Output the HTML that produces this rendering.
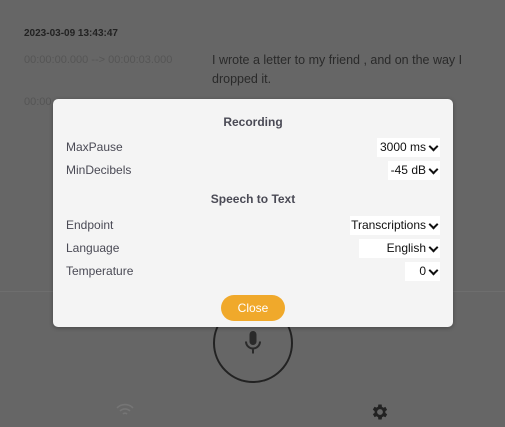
<!DOCTYPE html>
<html><head><style>
body{margin:0;width:505px;height:427px;background:#666;font-family:"Liberation Sans",sans-serif;position:relative;overflow:hidden}
.a{position:absolute;white-space:nowrap}
.modal{position:absolute;left:53px;top:99px;width:400px;height:228px;background:#f4f4f4;border-radius:5px;box-shadow:0 1px 4px rgba(0,0,0,.3)}
.h{position:absolute;left:0;width:400px;text-align:center;font-weight:bold;font-size:12px;color:#4a4a55}
.l{position:absolute;left:13px;font-size:12px;color:#4a4a55}
.s{position:absolute;right:13px;height:19px;background:#fff;font-size:12px;color:#111;text-align:right;line-height:19px;padding-right:14px;box-sizing:border-box}
.s:after{content:"";position:absolute;right:3px;top:5px;width:5px;height:5px;border-right:2px solid #111;border-bottom:2px solid #111;transform:rotate(45deg)}
</style></head><body>
<div class="a" style="left:24px;top:28px;font-size:10px;font-weight:bold;color:#222">2023-03-09 13:43:47</div>
<div class="a" style="left:24px;top:54px;font-size:11px;color:#555">00:00:00.000 --&gt; 00:00:03.000</div>
<div class="a" style="left:212px;top:51px;font-size:12.5px;color:#2a2a2a;line-height:19px">I wrote a letter to my friend , and on the way I<br>dropped it.</div>
<div class="a" style="left:24px;top:96px;font-size:11px;color:#555">00:00</div>
<div class="a" style="left:0;top:291px;width:505px;height:1px;background:#6e6e6e"></div>
<div class="a" style="left:213px;top:303px;width:76px;height:76px;border:2px solid #222;border-radius:50%"></div>
<svg class="a" style="left:241px;top:330px" width="24" height="26" viewBox="0 0 24 26"><rect x="8.5" y="1" width="7" height="14" rx="3.5" fill="#2a2a2a"/><path d="M5 11.5a7 7 0 0 0 14 0M12 18.5v5" stroke="#2a2a2a" stroke-width="2" fill="none"/></svg>
<svg class="a" style="left:115px;top:402px" width="20" height="16" viewBox="0 0 20 16"><path d="M2 6a11 11 0 0 1 16 0M5 9a7 7 0 0 1 10 0M8 12a3 3 0 0 1 4 0" stroke="#757575" stroke-width="1.6" fill="none"/></svg>
<svg class="a" style="left:370px;top:402px" width="20" height="20" viewBox="0 0 24 24"><path fill="#222" d="M19.4 13a7.5 7.5 0 0 0 0-2l2.1-1.6-2-3.5-2.5 1a7.6 7.6 0 0 0-1.7-1L15 3h-4l-.4 2.7a7.6 7.6 0 0 0-1.7 1l-2.5-1-2 3.5L6.6 11a7.5 7.5 0 0 0 0 2l-2.1 1.6 2 3.5 2.5-1a7.6 7.6 0 0 0 1.7 1L11 21h4l.4-2.7a7.6 7.6 0 0 0 1.7-1l2.5 1 2-3.5zM13 15.5a3.5 3.5 0 1 1 0-7 3.5 3.5 0 0 1 0 7z" transform="translate(-1 0)"/></svg>
<div class="modal">
<div class="h" style="top:16px">Recording</div>
<div class="l" style="top:41px">MaxPause</div><div class="s" style="top:39px;width:63px">3000 ms</div>
<div class="l" style="top:64px">MinDecibels</div><div class="s" style="top:62px;width:52px">-45 dB</div>
<div class="h" style="top:93px">Speech to Text</div>
<div class="l" style="top:119px">Endpoint</div><div class="s" style="top:117px;width:90px">Transcriptions</div>
<div class="l" style="top:142px">Language</div><div class="s" style="top:140px;width:81px">English</div>
<div class="l" style="top:165px">Temperature</div><div class="s" style="top:163px;width:35px">0</div>
<div class="a" style="left:168px;top:196px;width:64px;height:26px;border-radius:13px;background:#f0a92b;color:#fff;font-size:12px;text-align:center;line-height:26px">Close</div>
</div>
</body></html>
